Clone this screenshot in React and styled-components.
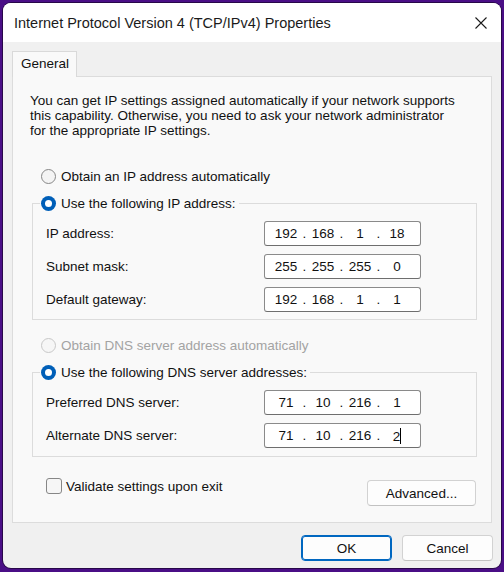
import styled, { createGlobalStyle, css } from "styled-components";

const GlobalStyle = createGlobalStyle`
	html, body {
		margin: 0;
		padding: 0;
		background: #4a0e86;
	}
	body {
		font-family: "Liberation Sans", Arial, sans-serif;
		font-size: 13.5px;
		color: #000;
	}
`;

const Page = styled.div`
	width: 504px;
	height: 572px;
	padding: 3px 3px 4px 3px;
	box-sizing: border-box;
`;

const Window = styled.div`
	width: 498px;
	height: 565px;
	border-radius: 8px;
	overflow: hidden;
	background: #f0f0f0;
	box-shadow: 0 0 0 1px rgba(0, 0, 0, 0.45);
	display: flex;
	flex-direction: column;
`;

const TitleBar = styled.div`
	height: 39px;
	background: #fff;
	display: flex;
	align-items: center;
	justify-content: space-between;
	padding: 0 14px 0 11px;
	font-family: "Liberation Sans", Arial, sans-serif;
	font-size: 14.5px;
	color: #1b1b1b;
`;

const Body = styled.div`
	flex: 1;
	display: flex;
	flex-direction: column;
	padding: 9px 8px 7px 9px;
`;

const TabStrip = styled.div`
	display: flex;
`;

const Tab = styled.div`
	width: 65px;
	height: 26px;
	box-sizing: border-box;
	border: 1px solid #d9d9d9;
	border-bottom: none;
	background: #f9f9f9;
	padding: 4px 0 0 8px;
	font-size: 13.5px;
	color: #111;
	margin-bottom: -1px;
	position: relative;
	z-index: 1;
`;

const Panel = styled.div`
	width: 480px;
	height: 447px;
	box-sizing: border-box;
	border: 1px solid #dcdcdc;
	background: #f9f9f9;
	padding: 16px 14px 0 17px;
	display: flex;
	flex-direction: column;
`;

const Intro = styled.p`
	margin: 0;
	line-height: 15px;
	color: #111;
`;

const Choice = styled.label`
	display: flex;
	align-items: center;
	gap: 5px;
	height: 17px;
	margin: ${(p) => p.$mt || 0}px 0 0 11px;
	color: ${(p) => (p.$disabled ? "#a3a3a3" : "#111")};
`;

const Radio = styled.span`
	width: 15px;
	height: 15px;
	box-sizing: border-box;
	border-radius: 50%;
	border: 1px solid #878787;
	background: #f4f4f4;
	position: relative;
	flex: none;

	${(p) =>
		p.$disabled &&
		css`
			border-color: #c8c8c8;
			background: #f6f6f6;
		`}

	${(p) =>
		p.$checked &&
		css`
			border: none;
			background: #005fb8;
			&::after {
				content: "";
				position: absolute;
				left: 4px;
				top: 4px;
				width: 7px;
				height: 7px;
				border-radius: 50%;
				background: #fff;
			}
		`}
`;

const Group = styled.fieldset`
	margin: ${(p) => p.$mt}px 0 0 2px;
	padding: 10px 55px ${(p) => p.$pb}px 13px;
	border: 1px solid #dcdcdc;
	border-radius: 0;
	min-width: 0;
	display: flex;
	flex-direction: column;
	gap: 8px;
`;

const Legend = styled.legend`
	display: flex;
	align-items: center;
	gap: 5px;
	height: 16px;
	padding: 0 3px 0 1px;
	margin-left: -6px;
	color: #111;
`;

const FieldRow = styled.div`
	display: grid;
	grid-template-columns: 218px 157px;
	align-items: center;
	color: #111;
`;

const IpBox = styled.div`
	width: 157px;
	height: 25px;
	box-sizing: border-box;
	border: 1px solid #8a8a8a;
	border-bottom-color: #6e6e6e;
	border-radius: 3px;
	background: #fff;
	display: flex;
	align-items: center;
	padding-left: 6px;
	color: #111;
`;

const Octet = styled.span`
	width: 30px;
	text-align: center;
`;

const Dot = styled.span`
	width: 7px;
	text-align: center;
`;

const Caret = styled.span`
	display: inline-block;
	width: 1px;
	height: 16px;
	background: #000;
	vertical-align: -3px;
`;

const Footer = styled.div`
	display: flex;
	align-items: flex-start;
	justify-content: space-between;
	margin: 23px 1px 0 16px;
`;

const Check = styled.label`
	display: flex;
	align-items: center;
	gap: 4px;
	margin-top: -2px;
	color: #111;
`;

const Box = styled.span`
	width: 16px;
	height: 16px;
	box-sizing: border-box;
	border: 1px solid #878787;
	border-radius: 3px;
	background: #f6f6f6;
`;

const Button = styled.button`
	width: ${(p) => p.$w}px;
	height: 26px;
	box-sizing: border-box;
	border: 1px solid #d2d2d2;
	border-bottom-color: #c2c2c2;
	border-radius: 4px;
	background: #fdfdfd;
	font-family: "Liberation Sans", Arial, sans-serif;
	font-size: 13.5px;
	color: #111;
	padding: 0;

	${(p) =>
		p.$primary &&
		css`
			border: 1px solid #0067c0;
			box-shadow: inset 0 0 0 1px #0067c0;
		`}
`;

const Actions = styled.div`
	display: flex;
	justify-content: flex-end;
	gap: 10px;
	margin-top: 12px;
`;

function IpField({ parts, caret }) {
	return (
		<IpBox>
			{parts.map((part, i) => (
				<>
					<Octet key={"o" + i}>
						{part}
						{caret && i === 3 && <Caret />}
					</Octet>
					{i < 3 && <Dot key={"d" + i}>.</Dot>}
				</>
			))}
		</IpBox>
	);
}

function CloseIcon() {
	return (
		<svg width="12" height="12" viewBox="0 0 12 12">
			<path d="M0.5 0.5 L11.5 11.5 M11.5 0.5 L0.5 11.5" stroke="#1b1b1b" strokeWidth="1.1" />
		</svg>
	);
}

export default function App() {
	return (
		<>
			<GlobalStyle />
			<Page>
				<Window>
					<TitleBar>
						<span>Internet Protocol Version 4 (TCP/IPv4) Properties</span>
						<CloseIcon />
					</TitleBar>
					<Body>
						<TabStrip>
							<Tab>General</Tab>
						</TabStrip>
						<Panel>
							<Intro>
								You can get IP settings assigned automatically if your network supports
								<br />
								this capability. Otherwise, you need to ask your network administrator
								<br />
								for the appropriate IP settings.
							</Intro>

							<Choice $mt={30}>
								<Radio />
								Obtain an IP address automatically
							</Choice>

							<Group $mt={10} $pb={7}>
								<Legend>
									<Radio $checked />
									Use the following IP address:
								</Legend>
								<FieldRow>
									IP address:
									<IpField parts={["192", "168", "1", "18"]} />
								</FieldRow>
								<FieldRow>
									Subnet mask:
									<IpField parts={["255", "255", "255", "0"]} />
								</FieldRow>
								<FieldRow>
									Default gateway:
									<IpField parts={["192", "168", "1", "1"]} />
								</FieldRow>
							</Group>

							<Choice $mt={17} $disabled>
								<Radio $disabled />
								Obtain DNS server address automatically
							</Choice>

							<Group $mt={10} $pb={8}>
								<Legend>
									<Radio $checked />
									Use the following DNS server addresses:
								</Legend>
								<FieldRow>
									Preferred DNS server:
									<IpField parts={["71", "10", "216", "1"]} />
								</FieldRow>
								<FieldRow>
									Alternate DNS server:
									<IpField parts={["71", "10", "216", "2"]} caret />
								</FieldRow>
							</Group>

							<Footer>
								<Check>
									<Box />
									Validate settings upon exit
								</Check>
								<Button $w={109}>Advanced...</Button>
							</Footer>
						</Panel>
						<Actions>
							<Button $w={91} $primary>
								OK
							</Button>
							<Button $w={91}>Cancel</Button>
						</Actions>
					</Body>
				</Window>
			</Page>
		</>
	);
}
